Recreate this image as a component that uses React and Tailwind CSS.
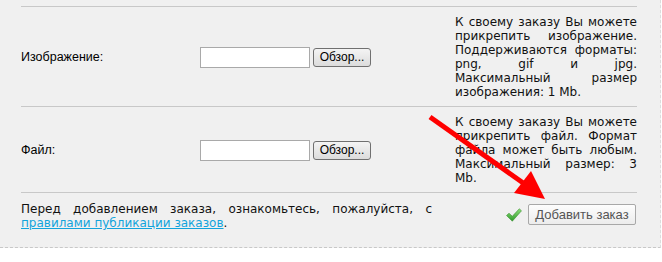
import React from "react";

const desc = "text-[12px] leading-[14px] text-justify [text-align-last:left] text-[#111] font-['DejaVu_Sans',sans-serif]";

function FileInput() {
  return (
    <div className="flex items-center gap-[3px]">
      <div className="w-[110px] h-[21px] bg-white border border-[#a9a9a9]" />
      <button className="w-[58px] h-[19px] rounded-[3px] border border-[#707070] bg-gradient-to-b from-[#f4f4f4] to-[#dcdcdc] text-[12px] leading-none text-black font-['Liberation_Sans',sans-serif]">
        Обзор...
      </button>
    </div>
  );
}

function Row({ label, children }) {
  return (
    <div className="flex items-center border-t border-[#c8c8c8] pt-[8px] pb-[7px]">
      <div className="w-[179px] text-[12.5px] text-black font-['Liberation_Sans',sans-serif]">{label}</div>
      <div className="w-[255px]">
        <FileInput />
      </div>
      <div className="w-[182px]">
        <p className={desc}>{children}</p>
      </div>
    </div>
  );
}

export default function App() {
  return (
    <div className="relative w-[662px] h-[262px] bg-white overflow-hidden">
      <div className="w-[661px] h-[248px] bg-[#f0f0f0] border-r border-[#dcdcdc] border-b border-b-[#c8c8c8] border-dashed pt-[6px] pl-[21px]">
        <div className="w-[616px]">
          <Row label="Изображение:">
            К своему заказу Вы можете прикрепить изображение. Поддерживаются форматы: png, gif и jpg. Максимальный размер изображения: 1 Mb.
          </Row>
          <Row label="Файл:">
            К своему заказу Вы можете прикрепить файл. Формат файла может быть любым. Максимальный размер: 3 Mb.
          </Row>
          <div className="flex items-start border-t border-[#c8c8c8] pt-[9px]">
            <p className={`${desc} w-[411px]`}>
              Перед добавлением заказа, ознакомьтесь, пожалуйста, с{" "}
              <a href="#" className="text-[#12a4dc] underline">правилами публикации заказов</a>.
            </p>
            <div className="flex-1 flex items-center justify-end gap-[6px] pt-[2px] pr-[1px]">
              <svg width="16" height="14" viewBox="0 0 16 14">
                <defs>
                  <linearGradient id="ck" x1="0" y1="0" x2="0" y2="1">
                    <stop offset="0" stopColor="#8ee07a" />
                    <stop offset="1" stopColor="#2e9a2a" />
                  </linearGradient>
                </defs>
                <path d="M0.5 7.5 L3 5.2 L6.3 8.3 L13.3 0.8 L15.5 2.8 L6.3 13.2 Z" fill="url(#ck)" stroke="#3a8f30" strokeWidth="0.6" />
              </svg>
              <button className="w-[108px] h-[21px] rounded-[2px] border border-[#a8a8a8] bg-gradient-to-b from-[#fdfdfd] to-[#ececec] text-[13px] leading-none text-[#555] font-['Liberation_Sans',sans-serif]">
                Добавить заказ
              </button>
            </div>
          </div>
        </div>
      </div>
      <svg className="absolute left-0 top-0 pointer-events-none" width="662" height="262">
        <line x1="430" y1="117" x2="526" y2="185" stroke="#ff0000" strokeWidth="5" />
        <polygon points="545,199 514,193 531,171" fill="#ff0000" />
      </svg>
    </div>
  );
}
